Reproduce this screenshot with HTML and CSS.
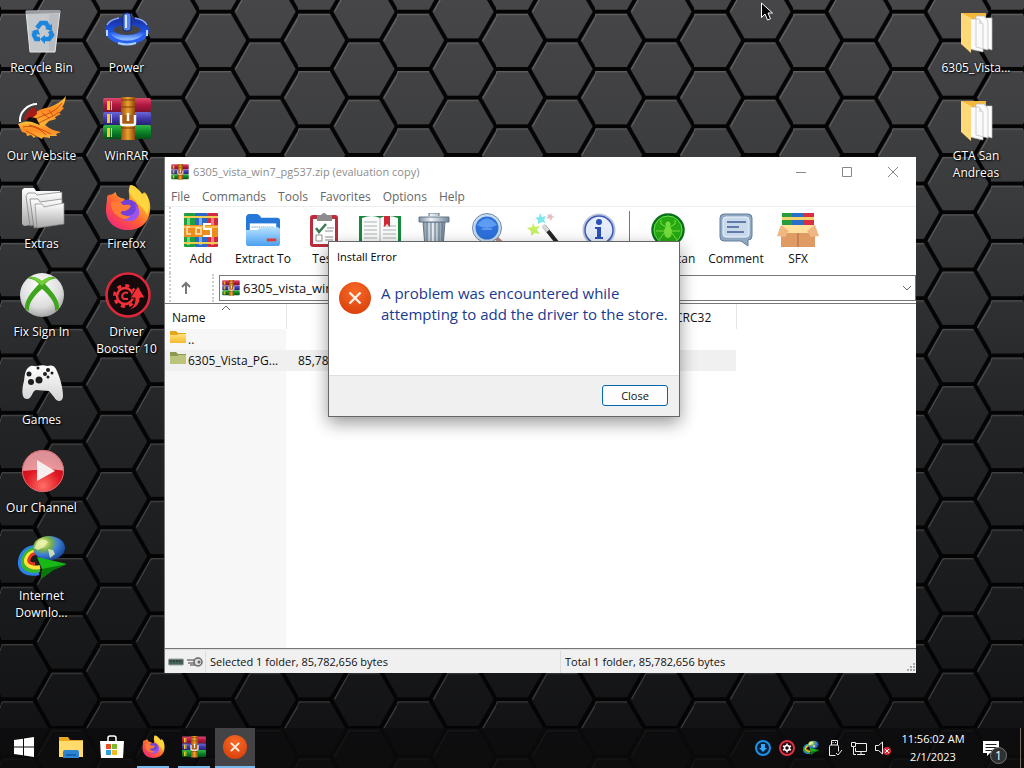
FILE: index.html
```html
<!DOCTYPE html>
<html lang="en">
<head>
  <meta charset="utf-8">
  <meta name="viewport" content="width=device-width, initial-scale=1.0">
  <title>Desktop</title>
  <link rel="stylesheet" href="styles.css">
</head>

<body>
  <!-- Shared gradients and icons -->
  <svg class="defs" width="0" height="0" aria-hidden="true">
    <defs>
      <pattern id="hex" width="99" height="57.3" patternUnits="userSpaceOnUse" patternTransform="translate(1 11.7)">
        <g fill="none" stroke="#fff" stroke-opacity=".2" stroke-width="1">
          <path d="M1 2.8h31M50.500 31.400h31M36 58.300l15-27M84.500 31.400l17-29M-14 30.400l15-27"/>
        </g>
        <path fill="none" stroke="#040405" stroke-width="4" d="M0 0h33l16.500 28.650h33L99 0M0 57.300h33l16.500-28.650M82.500 28.650L99 57.300M99 0h5M-5 0h5"/>
      </pattern>
      <linearGradient id="gRed" x2="0" y2="1"><stop stop-color="#e0486c"/><stop offset=".5" stop-color="#b01840"/><stop offset="1" stop-color="#7c1230"/></linearGradient>
      <linearGradient id="gBlue" x2="0" y2="1"><stop stop-color="#6d68d8"/><stop offset=".5" stop-color="#4038a8"/><stop offset="1" stop-color="#282070"/></linearGradient>
      <linearGradient id="gGreen" x2="0" y2="1"><stop stop-color="#34b848"/><stop offset=".5" stop-color="#0c8428"/><stop offset="1" stop-color="#045018"/></linearGradient>
      <linearGradient id="gBelt" x2="1" y2="0"><stop stop-color="#9a5210"/><stop offset=".5" stop-color="#eca030"/><stop offset="1" stop-color="#8c480c"/></linearGradient>
      <linearGradient id="gFox" x1="1" y1="0" x2=".2" y2="1"><stop stop-color="#fff04c"/><stop offset=".35" stop-color="#ffb02a"/><stop offset=".65" stop-color="#ff5b36"/><stop offset="1" stop-color="#f0267c"/></linearGradient>
      <linearGradient id="gFolder" x2="0" y2="1"><stop stop-color="#ffe27a"/><stop offset="1" stop-color="#f5b930"/></linearGradient>
      <linearGradient id="gSteel" x2="1" y2="0"><stop stop-color="#7d8fa0"/><stop offset=".4" stop-color="#eef4f8"/><stop offset="1" stop-color="#71869a"/></linearGradient>
      <linearGradient id="gSky" x2="0" y2="1"><stop stop-color="#b5e2ff"/><stop offset="1" stop-color="#4b9ff0"/></linearGradient>
      <linearGradient id="gGrey" x2="0" y2="1"><stop stop-color="#fff"/><stop offset="1" stop-color="#a9a9a9"/></linearGradient>
      <linearGradient id="gPad" x2="0" y2="1"><stop stop-color="#fff"/><stop offset="1" stop-color="#d4d4d4"/></linearGradient>
      <linearGradient id="gPower" x2="0" y2="1"><stop stop-color="#1c34a8"/><stop offset=".6" stop-color="#1c54e8"/><stop offset="1" stop-color="#8cb8ff"/></linearGradient>
      <linearGradient id="gWing" x2="0" y2="1"><stop stop-color="#ffc83c"/><stop offset=".5" stop-color="#ff8a24"/><stop offset="1" stop-color="#f8b838"/></linearGradient>
      <radialGradient id="gBall" cx=".45" cy=".3" r=".8"><stop stop-color="#fff"/><stop offset=".6" stop-color="#dcdcdc"/><stop offset="1" stop-color="#8c8c8c"/></radialGradient>
      <radialGradient id="gPlay" cx=".5" cy=".85" r=".7"><stop stop-color="#ff7068"/><stop offset=".6" stop-color="#e01822"/><stop offset="1" stop-color="#b00c18"/></radialGradient>
      <radialGradient id="gGlobe" cx=".3" cy=".3" r=".8"><stop stop-color="#f4f8a0"/><stop offset=".35" stop-color="#7cb048"/><stop offset=".6" stop-color="#3c80d8"/><stop offset="1" stop-color="#14408c"/></radialGradient>
      <radialGradient id="gError" cx=".5" cy=".3" r=".8"><stop stop-color="#f86a28"/><stop offset="1" stop-color="#d63c08"/></radialGradient>

      <symbol id="winrar" viewBox="0 0 48 44">
        <rect y="1" width="48" height="14" rx="2" fill="url(#gRed)"/>
        <rect y="15" width="48" height="13" rx="2" fill="url(#gBlue)"/>
        <rect y="28" width="48" height="14" rx="2" fill="url(#gGreen)"/>
        <path fill="#f0c830" d="M4 4h3v9H4zM4 17h3v9H4zM4 31h3v9H4z"/>
        <path stroke="#f0c830" stroke-width="1" d="M8.500 4v9M8.500 17v9M8.500 31v9"/>
        <rect x="18" width="14" height="43" fill="url(#gBelt)"/>
        <path d="M18 10h14M18 3h14M18 31h14" stroke="#7c3c08" stroke-width="1"/>
        <path d="M18 18v8q0 2 2 2h10q2 0 2-2v-8" fill="#a85c14" stroke="#f6f6f6" stroke-width="2.500"/>
        <path d="M25 16v8" stroke="#fff" stroke-width="2.500"/>
      </symbol>

      <symbol id="firefox" viewBox="0 0 48 48">
        <path fill="url(#gFox)" d="M4 13C6 9 9 12 11 9c1-1 2-1 2 0 0 2 2 4 5 5 4 0 5 3 3 5h4c3-7 0-9 1-14l2-4c3 0 8 4 11 9 2-1 2-2 2-2 5 5 7 12 6 19C46 39 37 46 25 46 12 46 3 38 3 26c0-5 1-6 1-13z"/>
        <circle cx="25" cy="26" r="10.500" fill="#7141d8"/>
        <path fill="#9c54f0" d="M16 24c1 8 8 10 14 6 3-2 4-7 1-10 6 3 7 11 2 15-7 5-17 1-17-11z"/>
        <path fill="#ff7a35" d="M8 18c6-2 10 0 12 3 3 0 6-1 8 1-2 4-5 5-8 5-3 0-3 3 0 4 3 1 5 1 7 1-3 4-6 4-9 2-6-3-10-7-10-16z"/>
        <path fill="#ffd63e" d="M27 1c7 3 11 7 14 12 1 1 2-3 1-5 5 7 5 17 2 23-3-8-8-9-11-14-5-5-8-9-6-16z"/>
      </symbol>

      <symbol id="error" viewBox="0 0 32 32">
        <circle cx="16" cy="16" r="16" fill="url(#gError)"/>
        <path d="M10.500 10.500l11 11M21.500 10.500l-11 11" stroke="#fff3ea" stroke-width="2.400" fill="none"/>
      </symbol>

      <symbol id="idm" viewBox="0 0 48 44">
        <g fill="none">
          <path d="M21 37C8 40 1 34 2 25S10 11 18 11" stroke="#2c80e8" stroke-width="4"/>
          <path d="M22 34C11 37 4 32 5 25s6-12 14-12" stroke="#38b830" stroke-width="4"/>
          <path d="M22 31C14 33 7 29 8 24s6-9 12-9" stroke="#ffe438" stroke-width="4"/>
          <path d="M17 28c-5 0-7-2-6-5s4-6 9-6" stroke="#e83820" stroke-width="3"/>
        </g>
        <ellipse cx="31" cy="12" rx="16" ry="12" fill="url(#gGlobe)"/>
        <path fill="#edf4ae" d="M20 5c5-3 8-1 10 1l-4 5-6 3-4-2zM30 13l5 1 2 4-5 4z" opacity=".8"/>
        <path fill="#18b818" d="M19 21l30 7-14 6-12 9 1-10z"/>
        <path fill="#087808" d="M24 33l25-5-14 6-12 9z"/>
      </symbol>

      <symbol id="papers" viewBox="0 0 48 48">
        <path fill="#f2b83c" d="M9 5h25v32H17z"/>
        <path fill="#fff" stroke="#b9b9b9" stroke-width=".7" d="M28 10h12v32l-12-4z"/>
        <path fill="#fafafa" stroke="#b9b9b9" stroke-width=".7" d="M24 8h8l4 5v29l-12-3zM18 11h9l4 5v28l-13-3z"/>
        <path fill="#ffd978" d="M9 5l10 5v35L9 36z"/>
        <path fill="#ddd" d="M27 11v5h4z"/>
      </symbol>

      <symbol id="books" viewBox="0 0 34 34">
        <rect width="11" height="34" rx="1" fill="#1f9f42"/><rect x="11" width="12" height="34" fill="#2d69c4"/><rect x="23" width="11" height="34" rx="1" fill="#d22a3e"/>
        <path fill="#70d77e" d="M3 5h3v27H3z"/><path fill="#75aaf0" d="M15 5h3v27h-3z"/><path fill="#f77b86" d="M27 5h3v27h-3z"/>
        <path fill="#f0cc50" d="M0 3h34v2H0zM0 29h34v2H0z"/>
        <path fill="#ef8c1e" d="M0 12h34v12H0z"/>
        <path fill="#ffbd4f" d="M0 13h34v2H0z"/>
        <path d="M6 14H3v7h4M12 15v6h5v-6z" fill="none" stroke="#ffe9b8" stroke-width="1.500"/>
        <path d="M27 11h-7v5h7v7h-8" fill="none" stroke="#fff" stroke-width="2"/>
      </symbol>
    </defs>
  </svg>

  <svg class="wallpaper" aria-hidden="true"><rect width="100%" height="100%" fill="url(#hex)"/></svg>

  <main class="desktop">
    <nav class="shortcuts" aria-label="Desktop">
      <a class="shortcut" href="#">
        <svg viewBox="0 0 48 48">
          <path fill="#c6c9cc" stroke="#e3e5e6" d="M8 3h34l-5 41H12z"/>
          <path fill="#999da1" d="M8 3l34-1v3L8 6z"/>
          <path fill="#b0b4b8" d="M31 6h10l-5 37h-5z" opacity=".6"/>
          <g fill="none" stroke="#1c86dc" stroke-width="4.500">
            <path d="M19 20l4-5h5l3 5"/><path d="M32 23l2 4-3 4h-5"/><path d="M22 31h-4l-2-4 2-4"/>
          </g>
          <path fill="#1c86dc" d="M34 16v7l-7-2zM27 27v9l-5-5zM13 24l7-3 2 6z"/>
        </svg>
        <span>Recycle Bin</span>
      </a>
      <a class="shortcut" href="#">
        <svg viewBox="0 0 48 48">
          <ellipse cx="24" cy="22" rx="18" ry="9" fill="none" stroke="url(#gPower)" stroke-width="8"/>
          <path d="M5 25c5 13 33 13 38 0" fill="none" stroke="#2860f0" stroke-width="4"/>
          <path d="M15 35c6 2 12 2 18 0" stroke="#a8d0ff" stroke-width="2" fill="none"/>
          <path d="M4 17c2-4 7-6 12-7M32 10c5 1 10 3 12 7" fill="none" stroke="#86a9f4" stroke-width="1.500"/>
          <rect x="20" y="5" width="8" height="18" rx="3" fill="#5686e8" stroke="#12237c"/>
          <path d="M23 7v13" stroke="#d2e6ff" stroke-width="2"/>
          <path d="M4 22v6M44 22v6" stroke="#b7d5ff" stroke-width="2"/>
        </svg>
        <span>Power</span>
      </a>
      <a class="shortcut" href="#">
        <svg viewBox="0 0 48 48">
          <path fill="url(#gWing)" d="M13 26c0-8 6-12 15-14 8-2 15-6 20-12-1 6-2 9-4 11l2 1-5 5 2 1-6 3 1 2-7 2-4 4z"/>
          <path fill="url(#gWing)" d="M0 28c8-3 18-5 27 1 5 4 10 6 16 7l-5 2 1 2h-7v2l-7-1-1 2-6-3-2 2-3-3-4 1-1-3-4-1z"/>
          <path fill="none" stroke="#cf4c12" d="M18 23c8-5 18-5 26-16M21 27c7-4 12-5 20-11M5 31c10-2 16 1 23 8M11 29c9 2 13 5 22 9M8 35l10 5M24 17l7 5M31 14l4 6"/>
          <path fill="none" stroke="#fff" stroke-width="2" d="M2 26C1 16 10 8 19 8"/>
          <path fill="#a31c18" d="M6 24c1-8 6-12 12-13l1 7-6 5z"/>
          <path fill="#111" d="M11 21l7 1 4 7-8-3-6-1z"/>
        </svg>
        <span>Our Website</span>
      </a>
      <a class="shortcut" href="#"><svg viewBox="0 0 48 48"><use href="#winrar" y="1" width="48" height="44"/></svg><span>WinRAR</span></a>
      <a class="shortcut" href="#">
        <svg viewBox="0 0 48 48">
          <path fill="url(#gGrey)" d="M4 6l2-2h10l2 3h24v5H14v29l-8 1-2-2z"/>
          <path fill="url(#gGrey)" stroke="#777" stroke-width=".7" d="M8 12l2-3h7l2 2 25-3v27l-32 7z"/>
          <path fill="url(#gGrey)" stroke="#777" stroke-width=".7" d="M12 15h8l2 3 22-3v24l-28 5z"/>
          <path fill="url(#gGrey)" stroke="#888" stroke-width=".7" d="M17 20h7l2 3 20-4v21l-27 4z"/>
        </svg>
        <span>Extras</span>
      </a>
      <a class="shortcut" href="#"><svg><use href="#firefox"/></svg><span>Firefox</span></a>
      <a class="shortcut" href="#">
        <svg viewBox="0 0 48 48">
          <circle cx="24" cy="23" r="22" fill="url(#gBall)"/>
          <path fill="#3fa51c" d="M12 5c5-1 9 2 12 4 3-2 7-5 12-4l2 2c-4-1-8 2-11 5 8 8 15 17 14 25l-4 2c1-8-6-16-13-22-7 6-14 14-13 22l-4-2c-1-8 6-17 14-25-3-3-7-6-11-5z"/>
          <path fill="#72cf35" d="M24 9c4-3 8-5 13-3-5 0-10 5-13 8-3-3-8-8-13-8 5-2 9 0 13 3z"/>
        </svg>
        <span>Fix Sign In</span>
      </a>
      <a class="shortcut" href="#">
        <svg viewBox="0 0 48 48">
          <circle cx="25" cy="23" r="21.500" fill="#16090b" stroke="#e0283a" stroke-width="2.500"/>
          <circle cx="22" cy="24" r="8" fill="none" stroke="#f23036" stroke-width="2.500"/>
          <circle cx="22" cy="24" r="10.500" fill="none" stroke="#f23036" stroke-width="3" stroke-dasharray="4 4.240"/>
          <path fill="none" stroke="#f23036" stroke-width="2" d="M25 21c-5-2-8 4-4 6h4"/>
          <path fill="#f23036" stroke="#16090b" d="M25 38c6-3 7-7 7-12h-5l8-12 7 12h-5c0 6-4 11-12 12z"/>
        </svg>
        <span>Driver Booster 10</span>
      </a>
      <a class="shortcut single" href="#">
        <svg viewBox="0 0 48 48">
          <path fill="url(#gPad)" d="M11 7c3-3 6 0 8-1 4-1 7-1 10 0 4-1 7-1 9 3 4 8 7 19 7 27 0 6-6 7-9 1l-5-6-13-1c-4 1-4 9-9 9-6 0-5-11-3-18 1-7 1-11 5-14z"/>
          <g fill="#1d1d1d"><circle cx="11" cy="14" r="2.500"/><circle cx="13" cy="22" r="3"/><circle cx="21" cy="20" r="3.500"/><circle cx="27" cy="14" r="2"/><circle cx="30" cy="10" r="2"/><circle cx="30" cy="17" r="1.500"/><circle cx="34" cy="13" r="1.500"/><circle cx="20" cy="8" r="1.500"/></g>
        </svg>
        <span>Games</span>
      </a>
      <a class="shortcut single" href="#">
        <svg viewBox="0 0 48 48">
          <circle cx="25" cy="23" r="21" fill="url(#gPlay)"/>
          <path fill="#fff" fill-opacity=".55" d="M4 23a21 21 0 0 1 42 0c-12-3-28-1-42 0z"/>
          <path fill="#f6eeee" d="M19 12l18 11-18 10z"/>
          <circle cx="25" cy="23" r="20.500" fill="none" stroke="#d76b70"/>
        </svg>
        <span>Our Channel</span>
      </a>
      <a class="shortcut single" href="#"><svg viewBox="0 0 48 48"><use href="#idm" width="48" height="44"/></svg><span>Internet Downlo...</span></a>
    </nav>

    <nav class="shortcuts shortcuts-right" aria-label="Folders">
      <a class="shortcut" href="#"><svg><use href="#papers"/></svg><span>6305_Vista...</span></a>
      <a class="shortcut" href="#"><svg><use href="#papers"/></svg><span>GTA San Andreas</span></a>
    </nav>

    <!-- WinRAR window -->
    <section class="window" aria-label="WinRAR">
      <header class="titlebar">
        <svg class="icon-small"><use href="#winrar"/></svg>
        <span class="title">6305_vista_win7_pg537.zip (evaluation copy)</span>
        <button aria-label="Minimize"><svg viewBox="0 0 12 12"><path d="M1 6.500h10"/></svg></button>
        <button aria-label="Maximize"><svg viewBox="0 0 12 12"><path d="M1.500 1.500h9v9h-9z"/></svg></button>
        <button aria-label="Close window"><svg viewBox="0 0 12 12"><path d="M1 1l10 10M11 1L1 11"/></svg></button>
      </header>

      <nav class="menu">
        <button>File</button>
        <button>Commands</button>
        <button>Tools</button>
        <button>Favorites</button>
        <button>Options</button>
        <button>Help</button>
      </nav>

      <div class="toolbar">
        <button><svg><use href="#books"/></svg>Add</button>
        <button>
          <svg viewBox="0 0 36 34">
            <path fill="#2577d8" d="M0 4q0-3 3-4h8q3 0 5 4h17q3 0 3 3v24H0z"/>
            <path fill="#fff" d="M4 10h28v8H4z"/><path d="M6 14h24" stroke="#8cb4dc" stroke-width="2" stroke-dasharray="1 1"/>
            <path fill="url(#gSky)" d="M0 17h12l4-3h17q3 0 3 3v14q0 3-3 3H3q-3 0-3-3z"/>
            <path fill="#df3b30" d="M22 26h10v3H22z"/>
          </svg>Extract To
        </button>
        <button>
          <svg viewBox="0 0 34 34">
            <rect x="3" y="2" width="28" height="32" rx="3" fill="#b92d3c"/><path fill="#fff" d="M6 6h22v25H6z"/>
            <path fill="#8c8c8c" d="M10 2h4q3-4 6 0h5v6H10z"/>
            <path d="M9 15l3 4 7-8" stroke="#3c7c54" stroke-width="2.500" fill="none"/>
            <path d="M20 15h7M18 18h8M9 22h6v6H9zM18 24h8M18 27h8" stroke="#909090" fill="none"/>
          </svg>Test
        </button>
        <button aria-label="View">
          <svg class="wide" viewBox="0 0 42 34">
            <path fill="#16883c" d="M0 3h42v31H0z"/><path fill="#fafafa" d="M3 5q10-4 18 0 8-4 18 0v25q-10-3-18 1-8-4-18-1z"/>
            <path d="M21 5v27M5 9h13M5 13h13M5 17h13M5 21h13M5 25h13M24 13h13M24 17h13M24 21h13M24 25h13" stroke="#a7b2b2"/>
            <path fill="#ce2938" d="M25 3h6v11l-3-3-3 3z"/>
          </svg>
        </button>
        <button aria-label="Delete">
          <svg viewBox="0 0 34 34">
            <path fill="url(#gSteel)" stroke="#657889" d="M6 9h22l-2 25H8z"/><path d="M10 9v24M14 9v24M18 9v24M22 9v24M25 9v24" stroke="#5f7386"/>
            <path fill="url(#gSteel)" stroke="#657889" d="M2 4h30v5H2zM12 3V0h10v3"/>
          </svg>
        </button>
        <button aria-label="Find">
          <svg viewBox="0 0 34 34"><path d="M23 23l10 9" stroke="#bc8780" stroke-width="4"/><circle cx="16" cy="15" r="13" fill="#2d71db" stroke="#c6dcec" stroke-width="3"/><circle cx="16" cy="15" r="14.500" fill="none" stroke="#708ca8"/><path fill="#5c9cf2" d="M6 12q10-13 20 0-10 6-20 0z"/><path d="M11 16h10" stroke="#95bff8"/></svg>
        </button>
        <button aria-label="Wizard">
          <svg viewBox="0 0 34 34"><path d="M17 13l15 19" stroke="#262626" stroke-width="4"/><path d="M16 12l5 6" stroke="#d8d8d8" stroke-width="4"/><path fill="#80e6ec" d="M13 0l2 4 4-1-2 4 2 3-4-1-4 2V7L8 5l4-1z"/><path fill="#c5f064" d="M6 10l2 4 5-1-3 4 3 4-5-1-4 3v-5l-4-3 5-1z"/><path fill="#dfc0c4" d="M24 0l1 3 3 1-3 1-1 3-2-3-3 1 2-3-1-2 3 1z"/></svg>
        </button>
        <button aria-label="Info">
          <svg viewBox="0 0 34 34"><circle cx="17" cy="17" r="15.500" fill="#edf2fc" stroke="#b9c4dc" stroke-width="2"/><circle cx="17" cy="17" r="14" fill="#e5edfb" stroke="#3c58b4" stroke-width="1.500"/><circle cx="17" cy="9" r="3" fill="#2c50b8"/><path fill="#2c50b8" d="M13 14h6v10h2v2h-8v-2h2v-8h-2z"/></svg>
        </button>
        <i class="separator"></i>
        <button>
          <svg viewBox="0 0 34 34"><circle cx="17" cy="17" r="15.500" fill="#26a812" stroke="#087018" stroke-width="2.500"/><circle cx="17" cy="17" r="14" fill="none" stroke="#69df4d"/><ellipse cx="17" cy="19" rx="4" ry="6" fill="#76dc3c"/><circle cx="17" cy="11" r="2.500" fill="#76dc3c"/><path d="M17 15l-7-4V7M17 15l7-4V7M13 18H5M21 18h8M13 20l-5 7M21 20l5 7" fill="none" stroke="#76dc3c"/></svg>VirusScan
        </button>
        <button>
          <svg viewBox="0 0 34 34"><path fill="#91a8c2" stroke="#647e9b" d="M5 1h24q4 0 4 4v18q0 4-4 4v6l-7-5H5q-4 0-4-4V5q0-4 4-4z"/><rect x="4" y="4" width="26" height="20" rx="3" fill="#c7d9eb" stroke="#edf5ff"/><path d="M8 9h19M8 14h12M8 19h17" stroke="#405f91" stroke-width="1.500"/></svg>Comment
        </button>
        <button>
          <svg class="wide" viewBox="0 0 42 34"><path fill="#269d3d" d="M5 0h10v17H5z"/><path fill="#286ec6" d="M15 0h11v17H15z"/><path fill="#d72e44" d="M26 0h11v17H26z"/><path fill="#f1d26b" d="M5 4h32v3H5z"/><path fill="#ffdf97" d="M5 12h32v6H5z"/><path fill="#e09a64" d="M4 17h34v17H4z"/><path fill="#ffe09c" d="M4 12h34l-5 8H9z"/><path fill="#f1b783" d="M4 12l-4 11 8 1 4-6zM38 12l4 11-8 1-4-6z"/><path d="M21 20v14" stroke="#a96a40"/></svg>SFX
        </button>
      </div>

      <div class="address">
        <button aria-label="Up one level"><svg viewBox="0 0 12 14"><path d="M6 13V2M2 6l4-4 4 4"/></svg></button>
        <label class="combo">
          <svg class="icon-small"><use href="#winrar"/></svg>
          <select aria-label="Address"><option>6305_vista_win7_pg537.zip</option></select>
          <svg class="arrow" viewBox="0 0 10 6"><path d="M1 1l4 4 4-4"/></svg>
        </label>
      </div>

      <div class="list">
        <table>
          <colgroup><col class="col-name"><col class="col-size"><col class="col-rest"><col class="col-crc"></colgroup>
          <thead>
            <tr><th><svg class="sort" viewBox="0 0 10 6"><path d="M1 5l4-4 4 4"/></svg>Name</th><th aria-label="Size"></th><th aria-label="Details"></th><th>CRC32</th></tr>
          </thead>
          <tbody>
            <tr>
              <td><svg class="folder" viewBox="0 0 16 14"><path fill="#e3a51b" d="M0 1h6l2 2h8v10H0z"/><path fill="url(#gFolder)" d="M0 5h7l2-1h7v9H0z"/></svg>..</td><td></td><td></td><td></td>
            </tr>
            <tr class="selected">
              <td><svg class="folder" viewBox="0 0 16 14"><path fill="#8a9a50" d="M0 1h6l2 2h8v10H0z"/><path fill="#bac47c" d="M0 5h7l2-1h7v9H0z"/></svg>6305_Vista_PG...</td><td>85,782,656</td><td></td><td></td>
            </tr>
          </tbody>
        </table>
      </div>

      <footer class="status">
        <span class="status-icons">
          <svg viewBox="0 0 16 12"><rect x=".5" y="3" width="15" height="6" rx="1" fill="#456054" stroke="#9aa3a0"/><path d="M2 5h12" stroke="#1f2c28" stroke-dasharray="2 1"/></svg>
          <svg viewBox="0 0 16 12"><path d="M0 4h8M1 7h8M3 9h6" stroke="#777" stroke-width="1.500"/><circle cx="11" cy="6" r="4" fill="#ddd" stroke="#666" stroke-width="1.500"/><circle cx="12" cy="6" r="1.500" fill="#666"/></svg>
        </span>
        <span>Selected 1 folder, 85,782,656 bytes</span>
        <span class="total">Total 1 folder, 85,782,656 bytes
          <svg class="grip" viewBox="0 0 10 10"><path fill="#aaa" d="M7 0h2v2H7zM7 3h2v2H7zM4 3h2v2H4zM7 6h2v2H7zM4 6h2v2H4zM1 6h2v2H1z"/></svg>
        </span>
      </footer>
    </section>

    <!-- Error dialog -->
    <section class="dialog" role="alertdialog" aria-labelledby="dialogTitle" aria-describedby="dialogText">
      <h1 id="dialogTitle">Install Error</h1>
      <div class="dialog-body">
        <svg><use href="#error"/></svg>
        <p id="dialogText">A problem was encountered while attempting to add the driver to the store.</p>
      </div>
      <div class="dialog-footer"><button>Close</button></div>
    </section>
  </main>

  <!-- Taskbar -->
  <footer class="taskbar">
    <button class="start" aria-label="Start"><svg viewBox="0 0 20 20"><path fill="#fff" d="M0 3l9-1.300V9.500H0zM10 1.500L20 0v9.500H10zM0 10.500h9v7.800L0 17zM10 10.500h10V20l-10-1.500z"/></svg></button>
    <button aria-label="File Explorer"><svg viewBox="0 0 24 24"><path fill="#e8a820" d="M0 2h9l2 3h13v17H0z"/><path fill="#ffdb6c" d="M0 6h24v16H0z"/><path fill="#2c84d0" d="M4 23v-6q0-2 2-2h12q2 0 2 2v6z"/><path fill="#1a64ac" d="M7 19h10v2H7z"/></svg></button>
    <button aria-label="Store"><svg viewBox="0 0 24 24"><path fill="none" stroke="#fff" stroke-width="1.500" d="M8 6V3q0-2 2-2h4q2 0 2 2v3"/><path fill="#fff" d="M0 6h24l-1 17H1z"/><path fill="#e5532d" d="M6 9h5v5H6z"/><path fill="#7cba30" d="M12 9h5v5h-5z"/><path fill="#2ea0df" d="M6 15h5v5H6z"/><path fill="#f8b820" d="M12 15h5v5h-5z"/></svg></button>
    <button class="open" aria-label="Firefox"><svg><use href="#firefox"/></svg></button>
    <button class="open" aria-label="WinRAR"><svg><use href="#winrar"/></svg></button>
    <button class="active" aria-label="Install Error"><svg><use href="#error"/></svg></button>

    <div class="tray">
      <button aria-label="Updates"><svg viewBox="0 0 16 16"><circle cx="8" cy="8" r="7" fill="#082038" stroke="#1c90e8" stroke-width="2"/><path fill="#32a8ff" d="M6 4h4v4h2l-4 4-4-4h2z"/></svg></button>
      <button aria-label="Driver Booster"><svg viewBox="0 0 16 16"><circle cx="8" cy="8" r="7" fill="#290b10" stroke="#dc3044" stroke-width="2"/><circle cx="8" cy="8" r="2.500" fill="none" stroke="#fff" stroke-width="1.500"/><path d="M8 3.500v2M8 10.500v2M4 6l2 1M10 9l2 1M12 6l-2 1M6 9l-2 1" stroke="#fff" stroke-width="1.500"/></svg></button>
      <button aria-label="Download Manager"><svg><use href="#idm"/></svg></button>
      <button aria-label="Safely remove hardware"><svg viewBox="0 0 16 16"><path fill="none" stroke="#eee" d="M4.500 5V.5h6V5M2.500 15.500v-9q0-1.500 1.500-1.500h6q1.500 0 1.500 1.500v5M2.500 15.500h6M9 13l2 2 4-5M6 2v1M8.500 2v1"/></svg></button>
      <button aria-label="Network"><svg viewBox="0 0 16 16"><path fill="none" stroke="#eee" d="M5 3.500h10.500v8H4.500V8M10 12v2.500M6 14.500h8M.5 2.500h4v4h-4zM2.500 6.500v8H5"/></svg></button>
      <button aria-label="Volume muted"><svg viewBox="0 0 16 16"><path fill="none" stroke="#eee" d="M.5 5.500h3L7.500 2v12l-4-3.500h-3z"/><circle cx="12" cy="11" r="4" fill="#d82c38"/><path d="M10 9l4 4M14 9l-4 4" stroke="#fff"/></svg></button>
      <button class="clock"><time>11:56:02 AM</time><time>2/1/2023</time></button>
      <button class="notifications" aria-label="Notifications"><svg viewBox="0 0 16 16"><path fill="#fff" d="M0 1h16v12H7l-3 3v-3H0z"/><path d="M2.500 4.500h11M2.500 7.500h11M2.500 10.500h8" stroke="#222"/></svg><span>1</span></button>
      <button class="show-desktop" aria-label="Show desktop"></button>
    </div>
  </footer>

  <svg class="pointer" viewBox="0 0 12 19" aria-hidden="true"><path fill="#050505" stroke="#fff" d="M.5 1v14.500L4 12l2.500 6 3-1.200L7 11h4.500z"/></svg>
</body>
</html>
```
FILE: styles.css
```css
* {
  box-sizing: border-box;
}

html, body {
  margin: 0;
  height: 100%;
}

body {
  display: flex;
  flex-direction: column;
  overflow: hidden;
  position: relative;
  font-family: "Open Sans", "Noto Sans", sans-serif;
  font-size: 12px;
  color: #111;
  background: linear-gradient(#464648, #3a3b3d 25%, #222426 55%, #17181a 85%, #101012);
}

button {
  border: 0;
  padding: 0;
  background: none;
  font: inherit;
  color: inherit;
}

svg {
  display: block;
  flex: none;
}

.defs,
.wallpaper {
  position: absolute;
  inset: 0;
}

.wallpaper {
  width: 100%;
  height: 100%;
}

/* Desktop */
.desktop {
  flex: 1;
  min-height: 0;
  position: relative;
  display: flex;
  justify-content: space-between;
  align-items: flex-start;
}

.shortcuts {
  display: grid;
  grid-template-columns: 83px 87px;
  grid-auto-rows: 88px;
}

.shortcuts-right {
  grid-template-columns: 96px;
}

.shortcut {
  display: flex;
  flex-direction: column;
  align-items: center;
  padding-top: 8px;
  color: #fff;
  text-align: center;
  text-decoration: none;
  line-height: 17px;
  text-shadow: 1px 1px 2px #000, 0 0 2px #000;
}

.shortcut svg {
  width: 48px;
  height: 48px;
  margin-bottom: 3px;
}

.shortcut span {
  max-width: 76px;
}

.single {
  grid-column: 1;
}

/* WinRAR window */
.window {
  position: absolute;
  top: 157px;
  right: 108px;
  bottom: 55px;
  left: 164px;
  display: flex;
  flex-direction: column;
  background: #fff;
  border-left: 1px solid #777;
}

.titlebar {
  display: flex;
  align-items: center;
  height: 29px;
  padding-left: 6px;
  color: #8c8c8c;
}

.icon-small {
  width: 18px;
  height: 16px;
}

.title {
  flex: 1;
  margin-left: 4px;
  font-size: 11px;
}

.titlebar button {
  width: 46px;
  height: 28px;
  display: grid;
  place-items: center;
}

.titlebar button svg {
  width: 12px;
  height: 12px;
  fill: none;
  stroke: #888;
}

.menu {
  display: flex;
  gap: 12px;
  height: 21px;
  padding-left: 6px;
  color: #666;
  border-bottom: 1px solid #eee;
}

.toolbar {
  display: grid;
  grid-template-columns: 60px 64px 58px 54px 54px 54px 58px 52px 8px 70px 66px 58px;
  height: 66px;
  margin-left: 4px;
  padding-top: 6px;
  border-left: 2px dotted #ccc;
}

.toolbar button {
  display: flex;
  flex-direction: column;
  align-items: center;
  gap: 3px;
  line-height: 18px;
  white-space: nowrap;
}

.toolbar svg {
  width: 34px;
  height: 34px;
}

.toolbar .wide {
  width: 42px;
}

.separator {
  width: 1px;
  margin: -2px 0 4px 4px;
  background: #777;
}

.address {
  display: flex;
  align-items: center;
  height: 29px;
  margin-left: 4px;
  border-left: 2px dotted #ccc;
}

.address button {
  width: 43px;
  height: 28px;
  padding-left: 9px;
  border-right: 2px dotted #ccc;
}

.address button svg {
  width: 12px;
  height: 14px;
  fill: none;
  stroke: #777;
  stroke-width: 2;
}

.combo {
  flex: 1;
  display: flex;
  align-items: center;
  height: 26px;
  margin-left: 5px;
  padding: 0 3px 0 2px;
  border: 1px solid #777;
}

.combo select {
  flex: 1;
  min-width: 0;
  height: 22px;
  padding: 0 0 0 3px;
  border: 0;
  appearance: none;
  background: none;
  font: inherit;
  font-size: 13px;
  color: #111;
}

.arrow,
.sort {
  width: 10px;
  height: 6px;
  fill: none;
  stroke: #666;
}

/* File list */
.list {
  flex: 1;
  min-height: 0;
  margin-top: 1px;
  border-top: 1px solid #777;
  border-bottom: 1px solid #777;
  background: linear-gradient(90deg, #f7f7f7 121px, #fff 121px);
}

table {
  width: 571px;
  table-layout: fixed;
  border-collapse: collapse;
}

.col-name { width: 121px; }
.col-size { width: 80px; }
.col-rest { width: 302px; }
.col-crc { width: 68px; }

th {
  position: relative;
  height: 25px;
  padding: 2px 7px 0;
  background: #fff;
  font-weight: normal;
  text-align: left;
}

th:first-child,
th:last-child {
  border-right: 1px solid #e5e5e5;
}

.sort {
  position: absolute;
  top: 1px;
  left: 56px;
}

td {
  height: 21px;
  padding: 0 7px;
  line-height: 20px;
  white-space: nowrap;
}

td:first-child {
  padding: 0 0 0 5px;
}

td:nth-child(2) {
  padding-left: 12px;
}

.selected td {
  background: #f0f0f0;
}

.folder {
  display: inline-block;
  width: 16px;
  height: 14px;
  margin-right: 2px;
}

/* Status bar */
.status {
  display: grid;
  grid-template-columns: 41px 1fr 1fr;
  height: 24px;
  padding-top: 1px;
  border-top: 1px solid #ddd;
  background: #f0f0f0;
  font-size: 11px;
}

.status > span {
  padding-left: 4px;
  line-height: 22px;
  border-right: 1px solid #ddd;
}

.status .status-icons {
  display: flex;
  align-items: center;
  gap: 3px;
  padding-left: 3px;
}

.status .total {
  display: flex;
  justify-content: space-between;
  border: 0;
}

.status-icons svg {
  width: 16px;
  height: 12px;
}

.grip {
  width: 10px;
  height: 10px;
  align-self: end;
}

/* Error dialog */
.dialog {
  position: absolute;
  top: 241px;
  left: 328px;
  width: 352px;
  border: 1px solid #666;
  background: #fff;
  box-shadow: 0 6px 16px rgba(0, 0, 0, 0.4);
}

.dialog h1 {
  margin: 0;
  padding-left: 8px;
  font-size: 11px;
  font-weight: normal;
  line-height: 30px;
  color: #000;
}

.dialog-body {
  display: flex;
  gap: 10px;
  min-height: 103px;
  padding: 10px 10px 0;
}

.dialog-body svg {
  width: 32px;
  height: 32px;
}

.dialog-body p {
  margin: 1px 0 0;
  font-size: 15px;
  line-height: 21px;
  color: #1a3a8f;
}

.dialog-footer {
  display: flex;
  justify-content: flex-end;
  padding: 9px 11px 10px;
  border-top: 1px solid #dfdfdf;
  background: #f0f0f0;
}

.dialog-footer button {
  width: 66px;
  height: 21px;
  border: 1px solid #0067b0;
  border-radius: 3px;
  background: #fdfdfd;
  font-size: 11px;
}

/* Taskbar */
.taskbar {
  position: relative;
  display: flex;
  gap: 1px;
  height: 40px;
  background: rgba(12, 12, 13, 0.75);
  color: #fff;
}

.taskbar > button {
  width: 40px;
  display: grid;
  place-items: center;
  border-bottom: 2px solid transparent;
}

.taskbar > button svg {
  width: 24px;
  height: 24px;
}

.taskbar .start {
  width: 48px;
  margin-right: 2px;
}

.taskbar .start svg {
  width: 20px;
  height: 20px;
}

.taskbar .open {
  width: 32px;
  margin: 0 4px;
  border-color: #76b9ed;
}

.taskbar .active {
  border-color: #76b9ed;
  background: #444446;
}

.tray {
  display: flex;
  margin-left: auto;
}

.tray button {
  width: 24px;
  display: grid;
  place-items: center;
}

.tray svg {
  width: 16px;
  height: 16px;
}

.tray .clock {
  width: 76px;
  align-content: center;
  font-size: 11px;
  line-height: 18px;
}

.tray .notifications {
  position: relative;
  width: 49px;
  padding-right: 10px;
}

.notifications span {
  position: absolute;
  right: 13px;
  bottom: 4px;
  width: 17px;
  line-height: 15px;
  border: 1px solid #777;
  border-radius: 50%;
  background: #303032;
}

.tray .show-desktop {
  width: 4px;
  border-left: 1px solid #77705f;
}

.pointer {
  position: absolute;
  top: 2px;
  left: 761px;
  width: 12px;
  height: 19px;
}
```
